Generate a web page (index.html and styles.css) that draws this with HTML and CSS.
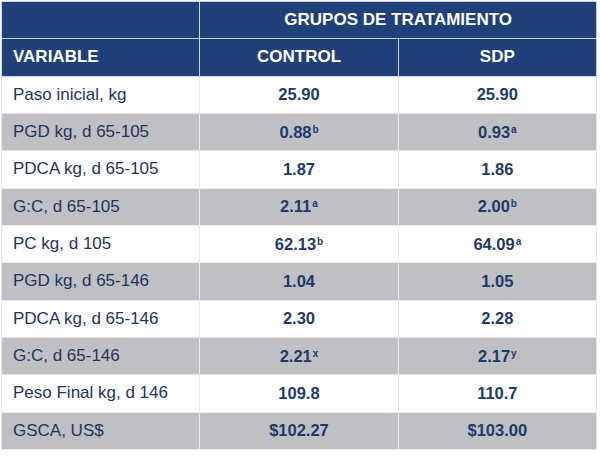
FILE: index.html
```html
<!DOCTYPE html>
<html lang="es">
<head>
<meta charset="utf-8">
<title>Grupos de tratamiento</title>
<link rel="stylesheet" href="styles.css">
</head>
<body>
<table class="tbl">
  <thead>
    <tr class="head">
      <th class="head-cell"></th>
      <th class="head-cell center" colspan="2">GRUPOS DE TRATAMIENTO</th>
    </tr>
    <tr class="head">
      <th class="head-cell left">VARIABLE</th>
      <th class="head-cell center">CONTROL</th>
      <th class="head-cell center">SDP</th>
    </tr>
  </thead>
  <tbody>
    <tr class="row"><td class="label">Paso inicial, kg</td><td class="val">25.90</td><td class="val">25.90</td></tr>
    <tr class="row alt"><td class="label">PGD kg, d 65-105</td><td class="val">0.88<sup>b</sup></td><td class="val">0.93<sup>a</sup></td></tr>
    <tr class="row"><td class="label">PDCA kg, d 65-105</td><td class="val">1.87</td><td class="val">1.86</td></tr>
    <tr class="row alt"><td class="label">G:C, d 65-105</td><td class="val">2.11<sup>a</sup></td><td class="val">2.00<sup>b</sup></td></tr>
    <tr class="row"><td class="label">PC kg, d 105</td><td class="val">62.13<sup>b</sup></td><td class="val">64.09<sup>a</sup></td></tr>
    <tr class="row alt"><td class="label">PGD kg, d 65-146</td><td class="val">1.04</td><td class="val">1.05</td></tr>
    <tr class="row"><td class="label">PDCA kg, d 65-146</td><td class="val">2.30</td><td class="val">2.28</td></tr>
    <tr class="row alt"><td class="label">G:C, d 65-146</td><td class="val">2.21<sup>x</sup></td><td class="val">2.17<sup>y</sup></td></tr>
    <tr class="row"><td class="label">Peso Final kg, d 146</td><td class="val">109.8</td><td class="val">110.7</td></tr>
    <tr class="row alt"><td class="label">GSCA, US$</td><td class="val">$102.27</td><td class="val">$103.00</td></tr>
  </tbody>
</table>
</body>
</html>
```
FILE: styles.css
```css
html, body {
  margin: 0;
  padding: 0;
  background: #ffffff;
}

body {
  padding: 1px 0 0 1px;
  font-family: "Liberation Sans", Arial, sans-serif;
}

.tbl {
  border-collapse: collapse;
  width: 596px;
  table-layout: fixed;
}

.tbl tr {
  height: 37.33px;
}

.tbl th,
.tbl td {
  padding: 0;
  border: 1.5px solid #e6e9ef;
}

.head-cell {
  background: #1f4079;
  color: #ffffff;
  font-weight: bold;
  font-size: 17px;
  border-color: #c9d3e6 !important;
}

.head-cell.left {
  text-align: left;
  padding-left: 11px !important;
}

.head-cell.center {
  text-align: center;
}

.row {
  background: #ffffff;
}

.row.alt {
  background: #bfc0c4;
}

.label {
  text-align: left;
  padding-left: 11px !important;
  font-size: 17px;
  color: #1e355e;
}

.val {
  text-align: center;
  font-size: 16.5px;
  font-weight: bold;
  color: #1f3a68;
}

.val sup {
  font-size: 10px;
  font-weight: bold;
  vertical-align: 5px;
  line-height: 0;
  margin-left: 1px;
}
```
